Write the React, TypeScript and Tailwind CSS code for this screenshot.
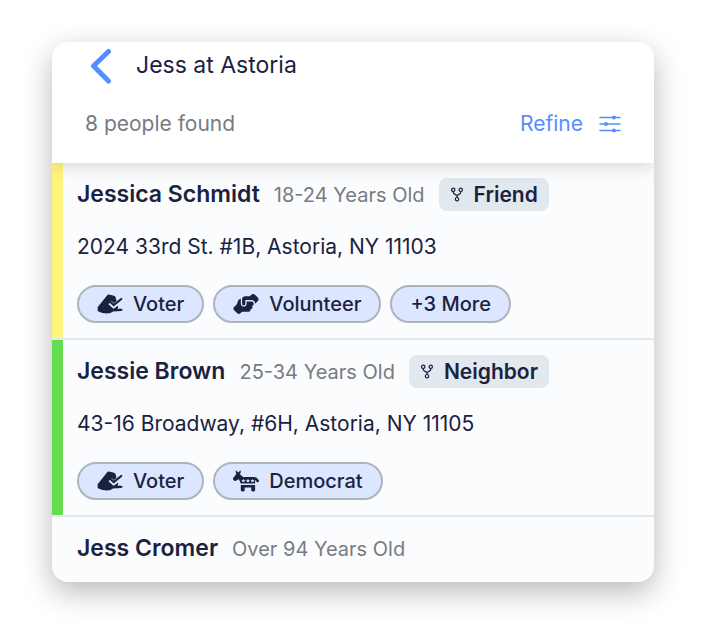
import React from "react";
import { FaDemocrat, FaHandshakeAngle } from "react-icons/fa6";

type Person = {
  name: string;
  age: string;
  relation?: string;
  address?: string;
  tags: string[];
  bar: string;
};

const people: Person[] = [
  {
    name: "Jessica Schmidt",
    age: "18-24 Years Old",
    relation: "Friend",
    address: "2024 33rd St. #1B, Astoria, NY 11103",
    tags: ["Voter", "Volunteer", "+3 More"],
    bar: "bg-[#fff57d]",
  },
  {
    name: "Jessie Brown",
    age: "25-34 Years Old",
    relation: "Neighbor",
    address: "43-16 Broadway, #6H, Astoria, NY 11105",
    tags: ["Voter", "Democrat"],
    bar: "bg-[#66dc50]",
  },
  {
    name: "Jess Cromer",
    age: "Over 94 Years Old",
    tags: [],
    bar: "bg-transparent",
  },
];

const ForkIcon = () => (
  <svg width="14" height="15" viewBox="0 0 14 16" fill="none" stroke="currentColor" strokeWidth="1.3">
    <circle cx="3" cy="3" r="1.8" />
    <circle cx="11" cy="3" r="1.8" />
    <circle cx="7" cy="13" r="1.8" />
    <path d="M3 4.8v.8Q3 7 4.5 7.6L7 9l2.5-1.4Q11 7 11 5.600v-.8M7 9v2.200" />
  </svg>
);

const VoteIcon = () => (
  <svg width="26" height="20" viewBox="0 0 26 20" fill="currentColor">
    <path d="M.8 13 10 1.400Q10.800.4 12 .6l5 1.200q1 .3 1.500 1.300l2.700 9.900-1 2.500H2Q-.2 15 .8 13Z" />
    <path d="m13 8.600 3.700 3.400 7.800-6" fill="none" stroke="#dde6ff" strokeWidth="4.500" />
    <path d="m13.200 7.800 3.500 3.200 7.600-6" fill="none" stroke="currentColor" strokeWidth="2.200" strokeLinecap="round" />
    <path d="M1.500 14.800h22.500q1.600.2 1.600 1t-1.600 1.100l-8 .6Q14 19.400 10 19.400q-5 0-9-2.200-1.200-1.600.5-2.400Z" />
  </svg>
);

const RefineIcon = () => (
  <svg width="22" height="18" viewBox="0 0 22 18" fill="currentColor" stroke="currentColor" strokeWidth="1.500" strokeLinecap="round">
    <path d="M1 2.500h20M1 9h20M1 15.500h20" />
    <circle cx="15" cy="2.500" r="1.300" />
    <circle cx="7" cy="9" r="1.300" />
    <circle cx="15" cy="15.500" r="1.300" />
  </svg>
);

const TagIcon = ({ tag }: { tag: string }) => {
  if (tag === "Voter") return <VoteIcon />;
  if (tag === "Volunteer") return <FaHandshakeAngle className="w-[26px] h-[22px]" />;
  if (tag === "Democrat") return <FaDemocrat className="w-[26px] h-[22px]" />;
  return null;
};

const PersonRow = ({ person }: { person: Person }) => {
  return (
    <li className="flex border-b-2 border-[#e3e8ec] last:border-b-0 last:pb-0.5">
      <div className={`w-[11px] shrink-0 ${person.bar}`} />
      <div className="grow px-[14px] py-[15px]">
        <div className="flex items-center h-[33px] gap-[14px] whitespace-nowrap">
          <div className="flex items-baseline gap-[14px]">
            <h2 className="text-[23px] font-semibold">{person.name}</h2>
            <span className="text-[20px] text-[#777b82]">{person.age}</span>
          </div>
          {person.relation && (
            <span className="h-[33px] px-[11px] flex items-center gap-[10px] rounded-lg bg-[#e1e8ee] text-[21px] font-semibold">
              <ForkIcon />
              {person.relation}
            </span>
          )}
        </div>
        {person.address && (
          <p className="mt-[22px] text-[21px] leading-[28px]">{person.address}</p>
        )}
        {person.tags.length > 0 && (
          <div className="mt-6 flex gap-[9px]">
            {person.tags.map((tag) => (
              <button
                key={tag}
                className="h-[38px] px-[18px] flex items-center gap-[10px] rounded-full border-2 border-[#aeb4be] bg-[#dde6ff] text-[20px] font-medium"
              >
                <TagIcon tag={tag} />
                {tag}
              </button>
            ))}
          </div>
        )}
      </div>
    </li>
  );
};

const App = () => {
  return (
    <div className="pt-[42px] pb-[58px] pl-[52px] pr-[49px] bg-white font-['Inter',sans-serif] text-[#1b2240]">
      <main className="rounded-[16px] overflow-hidden bg-[#fbfcfe] shadow-[0_10px_30px_rgba(0,0,0,0.28)]">
        <header className="relative bg-white px-[33px] pb-[25px] shadow-[0_4px_16px_rgba(0,0,0,0.14)]">
          <div className="flex items-center gap-6 h-[47px] pl-[5px]">
            <button aria-label="Back" className="text-[#568eff]">
              <svg width="22" height="36" viewBox="0 0 22 36" fill="none" stroke="currentColor" strokeWidth="5" strokeLinecap="round" strokeLinejoin="round">
                <path d="M18.500 3.500 3.500 18l15 15" />
              </svg>
            </button>
            <h1 className="text-[23px]">Jess at Astoria</h1>
          </div>
          <div className="mt-[21px] h-7 flex items-center justify-between">
            <p className="text-[21px] text-[#777b82]">8 people found</p>
            <button className="flex items-center gap-4 text-[21px] text-[#568eff]">
              Refine
              <RefineIcon />
            </button>
          </div>
        </header>
        <ul>
          {people.map((person) => (
            <PersonRow key={person.name} person={person} />
          ))}
        </ul>
      </main>
    </div>
  );
};

export default App;
